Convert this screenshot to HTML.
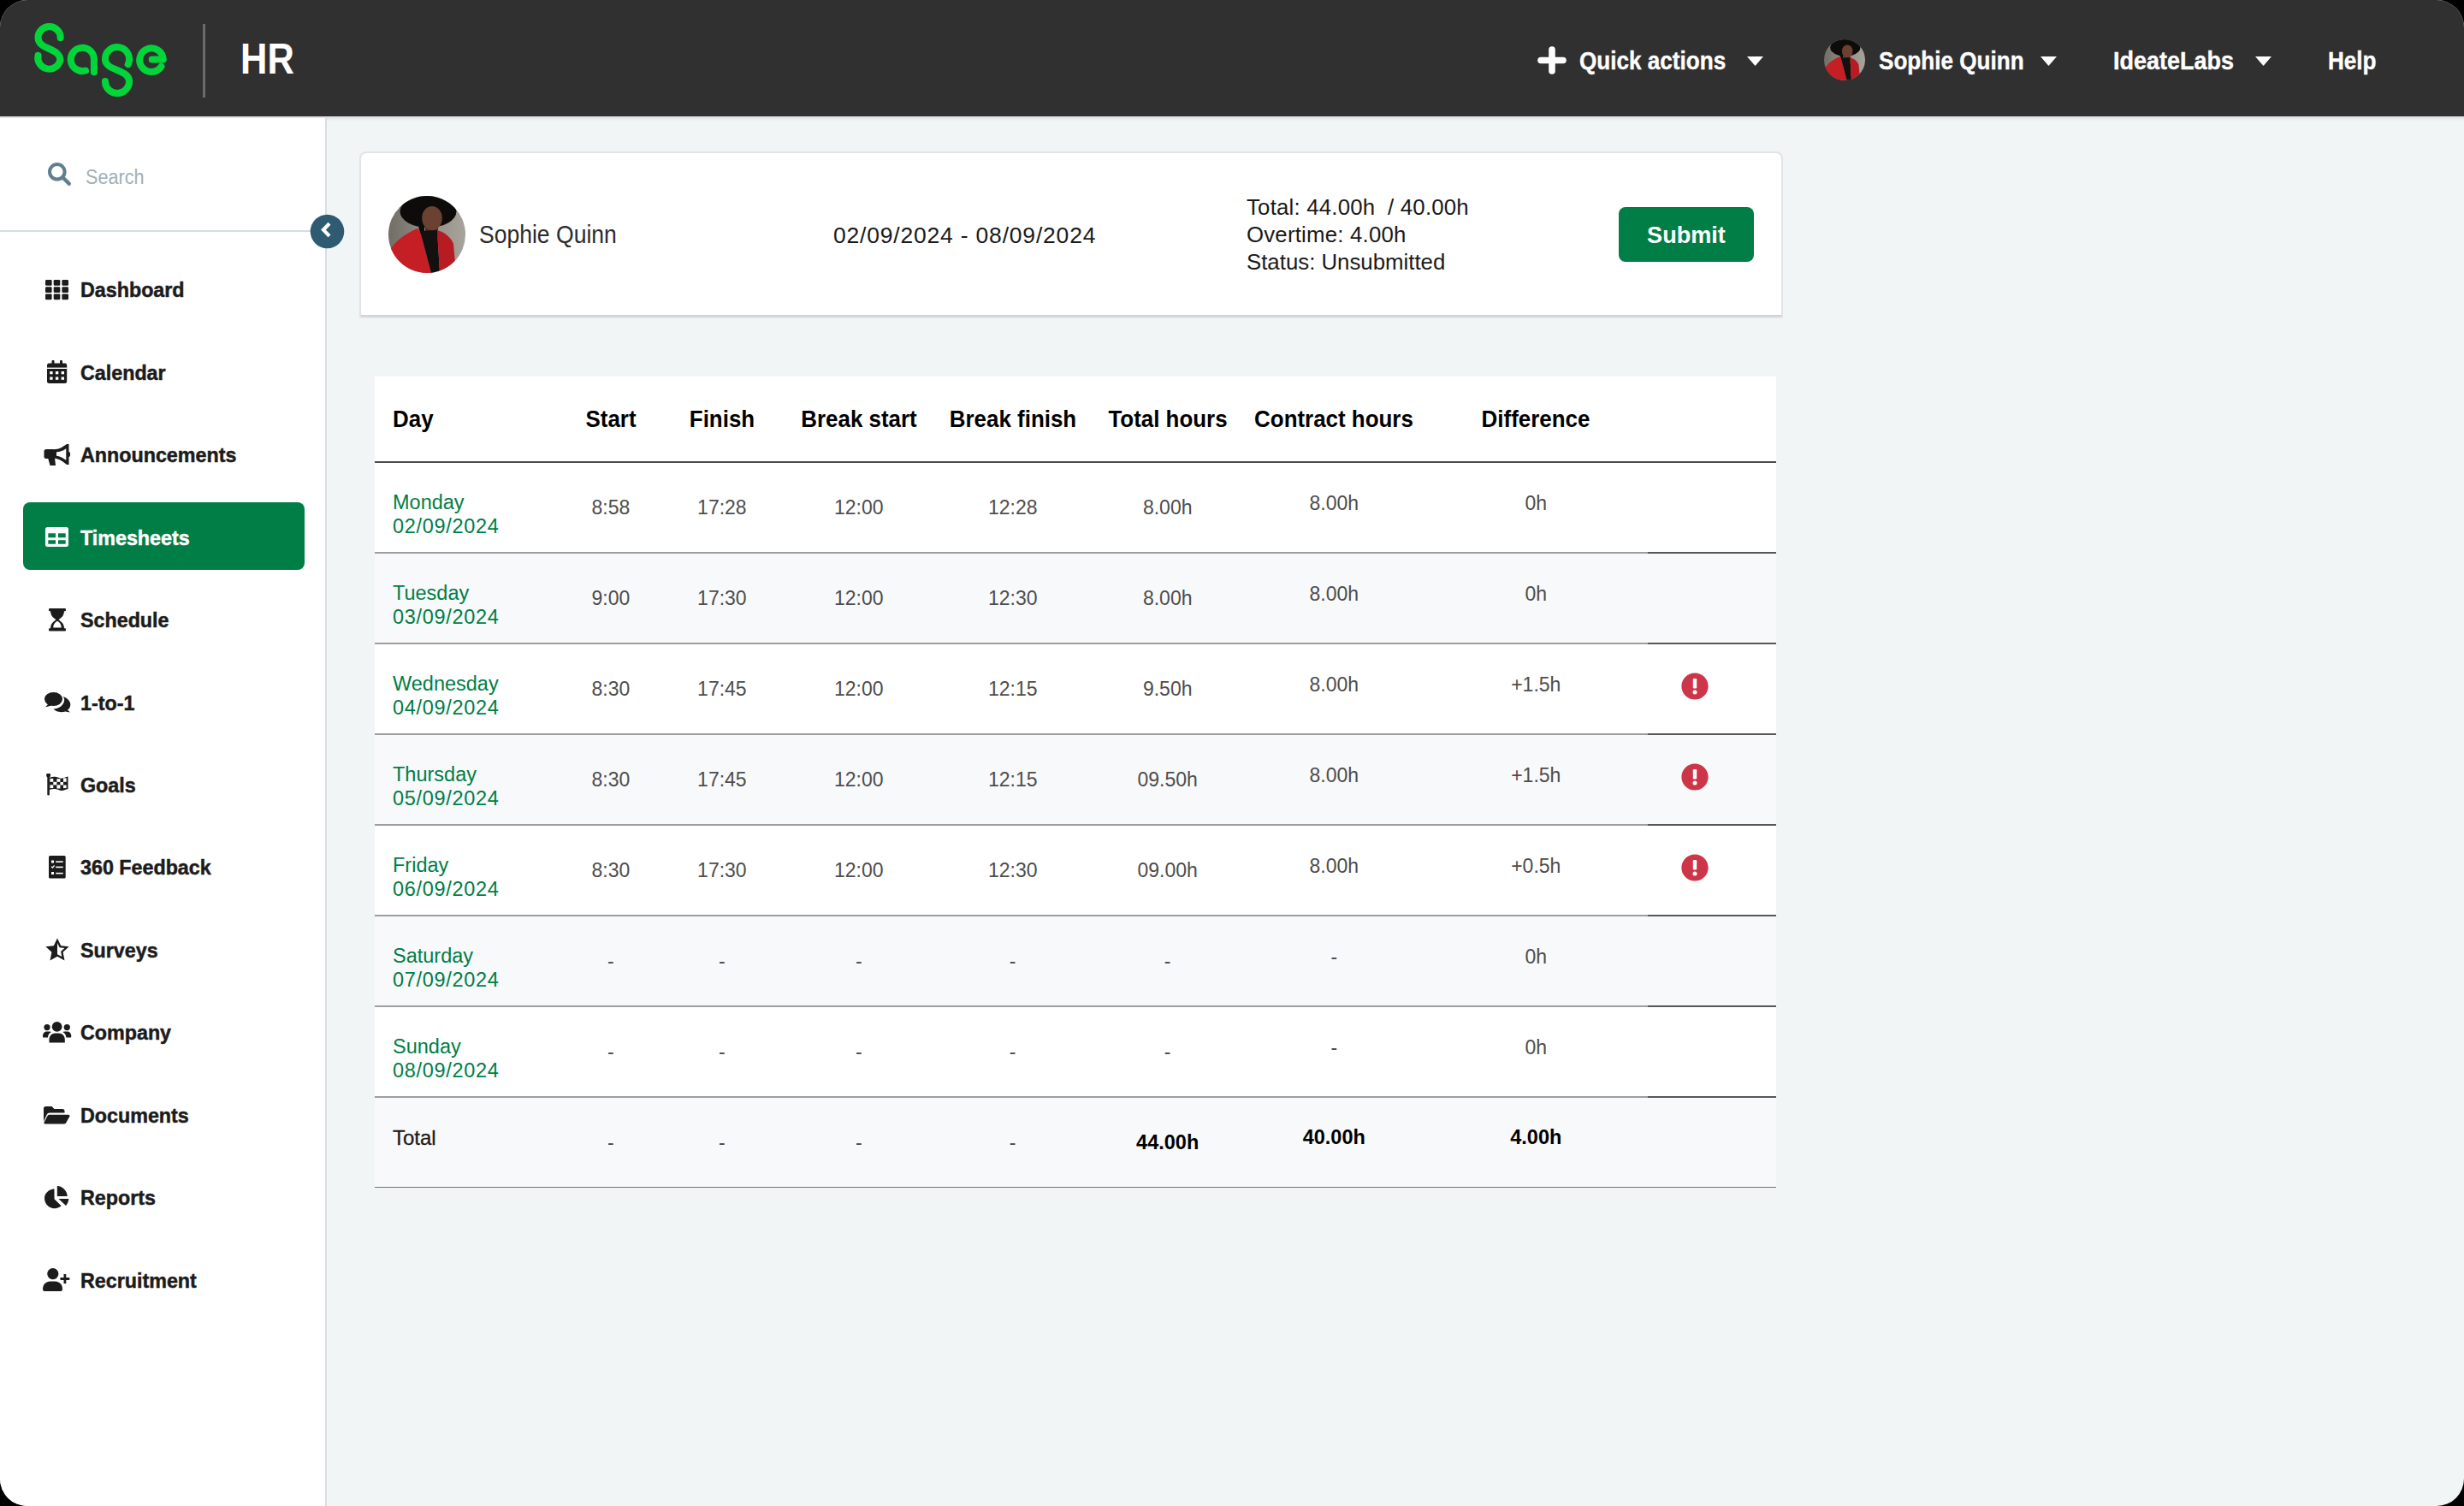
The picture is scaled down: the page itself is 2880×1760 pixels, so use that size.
<!DOCTYPE html>
<html><head><meta charset="utf-8"><title>Sage HR - Timesheets</title>
<style>
html,body{margin:0;padding:0;background:#000;width:2880px;height:1760px;overflow:hidden}
#root{position:absolute;left:0;top:0;width:2880px;height:1760px;border-radius:32px;overflow:hidden;background:#f2f5f6;font-family:"Liberation Sans",sans-serif}
.abs{position:absolute}
.t{position:absolute;white-space:nowrap}
#hdr{position:absolute;left:0;top:0;width:2880px;height:136px;background:#303030;border-bottom:2px solid #dfe3e6;box-shadow:0 2px 2px rgba(0,0,0,0.05)}
#side{position:absolute;left:0;top:138px;width:380px;height:1622px;background:#fff;border-right:2px solid #d8dee2}
</style></head><body><div id="root">
<div id="hdr"></div>
<svg class="abs" style="left:0;top:0" width="220" height="136" viewBox="0 0 220 136">
<g fill="none" stroke="#00d639" stroke-width="8" stroke-linecap="round" stroke-linejoin="round">
<path d="M70.7 44.2 A13.1 13.1 0 1 0 44.5 44.2 C44.5 58, 70.4 56, 70.4 70 A13.1 13.1 0 1 1 44.5 64.9"/>
<path d="M100.0 82.5 A13.6 13.6 0 1 1 109.9 69.3 L109.9 84.3"/>
<path d="M149.7 75.2 A14.1 14.1 0 1 0 122.9 69.3 C122.9 83, 151.1 81, 151.1 94.9 A14.1 14.1 0 1 1 122.9 94.9"/>
<path d="M177.7 69.5 L190.8 69.5 A13.8 13.8 0 1 0 188.5 77.8"/>
</g></svg>
<div class="abs" style="left:237px;top:28px;width:3px;height:86px;background:#6b6b6b"></div>
<div class="t" style="left:281.0px;top:44.4px;font-size:50px;line-height:50px;font-weight:700;color:#ffffff;transform-origin:0 0;transform:scaleX(0.87);">HR</div>
<svg class="abs" style="left:1797px;top:54px" width="34" height="33" viewBox="0 0 34 33"><path d="M17 4 V29 M4 16.5 H30" stroke="#fff" stroke-width="7.6" stroke-linecap="round"/></svg>
<div class="t" style="left:1846.0px;top:56.8px;font-size:29px;line-height:29px;font-weight:700;color:#ffffff;transform-origin:0 0;transform:scaleX(0.9);-webkit-text-stroke:0.4px #fff">Quick actions</div>
<svg class="abs" style="left:2042px;top:65.5px" width="19" height="11" viewBox="0 0 19 11"><path d="M0 0 H19 L9.5 11 Z" fill="#fff"/></svg>
<svg class="abs" style="left:2132px;top:46px" width="48" height="48" viewBox="0 0 90 90">
<defs><clipPath id="av1"><circle cx="45" cy="45" r="45"/></clipPath>
<linearGradient id="av1g" x1="0" x2="1"><stop offset="0" stop-color="#726e67"/><stop offset="0.55" stop-color="#948f87"/><stop offset="1" stop-color="#a7a49c"/></linearGradient></defs>
<g clip-path="url(#av1)">
<rect width="90" height="90" fill="url(#av1g)"/>
<ellipse cx="46.5" cy="18" rx="33" ry="19" fill="#0e0c0b"/><path d="M34 30 L42 30 L42 44 L37 44 Z" fill="#0e0c0b"/>
<path d="M43 34 L58 34 L58 48 L43 48 Z" fill="#4e2e20"/>
<ellipse cx="51" cy="26" rx="11.8" ry="14" fill="#6b4232"/>
<path d="M38 16 C42 9 58 9 63 16 L63 10 C56 4 44 4 38 10 Z" fill="#0e0c0b"/>
<path d="M0 66 C8 52 20 44 34 38 L37 41 L50 90 L0 90 Z" fill="#c51f25"/>
<path d="M37 41 L57 40 L60 90 L50 90 Z" fill="#131010"/>
<path d="M57 40 C65 42 73 48 76 56 L78 78 L70 90 L60 90 Z" fill="#b71c22"/>
</g></svg>
<div class="t" style="left:2196.0px;top:56.8px;font-size:29px;line-height:29px;font-weight:700;color:#ffffff;transform-origin:0 0;transform:scaleX(0.9);-webkit-text-stroke:0.4px #fff">Sophie Quinn</div>
<svg class="abs" style="left:2385px;top:65.5px" width="19" height="11" viewBox="0 0 19 11"><path d="M0 0 H19 L9.5 11 Z" fill="#fff"/></svg>
<div class="t" style="left:2470.0px;top:56.8px;font-size:29px;line-height:29px;font-weight:700;color:#ffffff;transform-origin:0 0;transform:scaleX(0.93);-webkit-text-stroke:0.4px #fff">IdeateLabs</div>
<svg class="abs" style="left:2636px;top:65.5px" width="19" height="11" viewBox="0 0 19 11"><path d="M0 0 H19 L9.5 11 Z" fill="#fff"/></svg>
<div class="t" style="left:2721.0px;top:57.1px;font-size:29px;line-height:29px;font-weight:700;color:#ffffff;transform-origin:0 0;transform:scaleX(0.9);-webkit-text-stroke:0.4px #fff">Help</div>
<div id="side"></div>
<svg class="abs" style="left:55px;top:189px" width="30" height="30" viewBox="0 0 30 30"><circle cx="11.8" cy="11.8" r="8.8" fill="none" stroke="#5f7f8e" stroke-width="4"/><path d="M18.3 18.3 L25.8 25.8" stroke="#5f7f8e" stroke-width="4.4" stroke-linecap="round"/></svg>
<div class="t" style="left:100.0px;top:195.6px;font-size:23.5px;line-height:23.5px;color:#a2afb6;transform-origin:0 0;transform:scaleX(0.92);">Search</div>
<div class="abs" style="left:0;top:269px;width:365px;height:2px;background:#d5dde1"></div>
<svg class="abs" style="left:362px;top:250.2px" width="41" height="41" viewBox="0 0 41 41"><circle cx="20.5" cy="20.5" r="19.8" fill="#2f5b72"/><path d="M23 11.3 L16 18.6 L23 25.9" fill="none" stroke="#fff" stroke-width="4.2"/></svg>
<div class="abs" style="left:27px;top:587px;width:329px;height:79px;background:#007e45;border-radius:8px"></div>
<svg class="abs" style="left:53px;top:326.8px" width="30" height="26" viewBox="0 0 30 26"><g fill="#1c1c1c"><rect x="0.0" y="0.0" width="7.6" height="6.8" rx="1.2"/><rect x="0.0" y="8.2" width="7.6" height="6.8" rx="1.2"/><rect x="0.0" y="16.4" width="7.6" height="6.8" rx="1.2"/><rect x="9.7" y="0.0" width="7.6" height="6.8" rx="1.2"/><rect x="9.7" y="8.2" width="7.6" height="6.8" rx="1.2"/><rect x="9.7" y="16.4" width="7.6" height="6.8" rx="1.2"/><rect x="19.4" y="0.0" width="7.6" height="6.8" rx="1.2"/><rect x="19.4" y="8.2" width="7.6" height="6.8" rx="1.2"/><rect x="19.4" y="16.4" width="7.6" height="6.8" rx="1.2"/></g></svg>
<div class="t" style="left:94.0px;top:327.2px;font-size:24px;line-height:24px;font-weight:700;color:#1c1c1c;transform-origin:0 0;transform:scaleX(0.97);-webkit-text-stroke:0.5px #1c1c1c">Dashboard</div>
<svg class="abs" style="left:55px;top:421px" width="30" height="30" viewBox="0 0 30 30"><g fill="#1c1c1c"><rect x="0" y="3.5" width="23.2" height="23.5" rx="2.5"/><rect x="5.5" y="0" width="3" height="6" rx="1"/><rect x="15" y="0" width="3" height="6" rx="1"/></g><g fill="#fff"><rect x="0" y="8.6" width="23.2" height="1.4"/><rect x="3.2" y="13" width="3.4" height="3.3"/><rect x="9.9" y="13" width="3.4" height="3.3"/><rect x="16.6" y="13" width="3.4" height="3.3"/><rect x="3.2" y="19.5" width="3.4" height="3.3"/><rect x="9.9" y="19.5" width="3.4" height="3.3"/><rect x="16.6" y="19.5" width="3.4" height="3.3"/></g></svg>
<div class="t" style="left:94.0px;top:423.6px;font-size:24px;line-height:24px;font-weight:700;color:#1c1c1c;transform-origin:0 0;transform:scaleX(0.97);-webkit-text-stroke:0.5px #1c1c1c">Calendar</div>
<svg class="abs" style="left:51.4px;top:518px" width="33" height="29" viewBox="0 0 33 29"><g fill="#1c1c1c"><rect x="0.5" y="7" width="13" height="11" rx="2.5"/><path d="M5 17 H13 L14 26 H7.5 Z"/><path d="M12 7.2 C17 7.2 21 5.5 27 1 L29.5 1 V25 L27 25 C21 20 17 17.8 12 17.8 Z M15 10.3 V14.7 C18.6 15 21.8 16.6 26.3 19.8 V6.2 C21.8 9.3 18.6 10 15 10.3 Z" fill-rule="evenodd"/><ellipse cx="29.5" cy="13" rx="1.6" ry="3"/></g></svg>
<div class="t" style="left:94.0px;top:520.1px;font-size:24px;line-height:24px;font-weight:700;color:#1c1c1c;transform-origin:0 0;transform:scaleX(0.97);-webkit-text-stroke:0.5px #1c1c1c">Announcements</div>
<svg class="abs" style="left:53.1px;top:616px" width="30" height="26" viewBox="0 0 30 26"><g fill="#ffffff"><path fill-rule="evenodd" d="M2.5 0 H24.5 A2.5 2.5 0 0 1 27 2.5 V20.5 A2.5 2.5 0 0 1 24.5 23 H2.5 A2.5 2.5 0 0 1 0 20.5 V2.5 A2.5 2.5 0 0 1 2.5 0 Z M3.3 7.3 V12.3 H12 V7.3 Z M15 7.3 V12.3 H23.7 V7.3 Z M3.3 15.2 V19.8 H12 V15.2 Z M15 15.2 V19.8 H23.7 V15.2 Z"/></g></svg>
<div class="t" style="left:94.0px;top:616.6px;font-size:24px;line-height:24px;font-weight:700;color:#ffffff;transform-origin:0 0;transform:scaleX(0.97);-webkit-text-stroke:0.5px #ffffff">Timesheets</div>
<svg class="abs" style="left:56.5px;top:710.5px" width="23" height="29" viewBox="0 0 23 29"><g fill="#1c1c1c"><rect x="0" y="0" width="20" height="3.2" rx="1"/><rect x="0" y="23.2" width="20" height="3.2" rx="1"/><path d="M2 2.5 H18 C18 9 14.5 11 11.5 13.2 C14.5 15.4 18 17.5 18 24 H2 C2 17.5 5.5 15.4 8.5 13.2 C5.5 11 2 9 2 2.5 Z M10 14.8 C7 16.5 5.4 18.5 5.2 22.4 H14.8 C14.6 18.5 13 16.5 10 14.8 Z" fill-rule="evenodd"/></g></svg>
<div class="t" style="left:94.0px;top:713.0px;font-size:24px;line-height:24px;font-weight:700;color:#1c1c1c;transform-origin:0 0;transform:scaleX(0.97);-webkit-text-stroke:0.5px #1c1c1c">Schedule</div>
<svg class="abs" style="left:51.5px;top:808.6px" width="33" height="27" viewBox="0 0 33 27"><g fill="#1c1c1c"><ellipse cx="10.5" cy="8" rx="10.5" ry="8"/><path d="M1 17.5 L5 13 L8 15.5 Z"/><path d="M21.5 5.2 C26.5 6.5 30.3 10 30.3 14.3 C30.3 17 29 19.3 27 20.8 L30 23.5 L24.3 22.5 C22.8 23 21.2 23.2 19.5 23.2 C15.7 23.2 12.5 21.8 10.5 19.6 C17.6 19.3 23.2 14.5 23.2 8.5 C23.2 7.3 22.5 6.2 21.5 5.2 Z"/></g></svg>
<div class="t" style="left:94.0px;top:809.5px;font-size:24px;line-height:24px;font-weight:700;color:#1c1c1c;transform-origin:0 0;transform:scaleX(0.97);-webkit-text-stroke:0.5px #1c1c1c">1-to-1</div>
<svg class="abs" style="left:53.8px;top:903.8px" width="29" height="30" viewBox="0 0 29 30"><g fill="#1c1c1c"><circle cx="2.6" cy="2" r="2.5"/><rect x="1.3" y="2" width="2.6" height="23.6" rx="1.3"/><path d="M3.8 5 C6 3.8 8.5 3.4 10.9 3.8 C13.5 4.2 15.5 5.7 18.1 5.7 C20.5 5.7 22.5 4 25.5 3.6 V18 C22.5 18.4 20.5 20 18.1 20 C15.5 20 13.5 18.4 10.9 18.1 C8.5 17.8 6 18.1 3.8 19 Z"/></g><g fill="#fff"><rect x="4.4" y="5.9" width="3.9" height="3.9"/><rect x="12.4" y="6.2" width="4" height="3.6"/><rect x="20" y="5.3" width="3.6" height="4.5"/><rect x="8.3" y="9.8" width="4.1" height="3.5"/><rect x="16.4" y="10" width="3.6" height="3.5"/><rect x="4.4" y="13.3" width="3.9" height="3.8"/><rect x="12.4" y="13.3" width="4" height="4.2"/><rect x="20" y="13.5" width="3.6" height="3.6"/></g></svg>
<div class="t" style="left:94.0px;top:905.9px;font-size:24px;line-height:24px;font-weight:700;color:#1c1c1c;transform-origin:0 0;transform:scaleX(0.97);-webkit-text-stroke:0.5px #1c1c1c">Goals</div>
<svg class="abs" style="left:56.8px;top:1000px" width="23" height="30" viewBox="0 0 23 30"><g fill="#1c1c1c"><rect x="0" y="0" width="19.7" height="26.5" rx="1.5"/></g><g fill="#fff"><rect x="3" y="5.5" width="3" height="3"/><rect x="8.2" y="6.3" width="8.5" height="1.6"/><path d="M3 12.6 L4.4 14 L6.6 11.5" stroke="#fff" stroke-width="1.2" fill="none"/><rect x="8.2" y="12.6" width="8.5" height="1.6"/><rect x="3" y="19" width="3" height="3"/><rect x="8.2" y="19.8" width="8.5" height="1.6"/></g></svg>
<div class="t" style="left:94.0px;top:1002.4px;font-size:24px;line-height:24px;font-weight:700;color:#1c1c1c;transform-origin:0 0;transform:scaleX(0.97);-webkit-text-stroke:0.5px #1c1c1c">360 Feedback</div>
<svg class="abs" style="left:52.5px;top:1096px" width="31" height="30" viewBox="0 0 31 30"><g fill="#1c1c1c"><path fill-rule="evenodd" d="M14 0.5 L18.2 9.2 L27.6 10.3 L20.6 16.8 L22.5 26.5 L14 21.8 L5.5 26.5 L7.4 16.8 L0.4 10.3 L9.8 9.2 Z M14 6 V19.2 L19.3 22.1 L18.1 16 L22.4 12.1 L16.6 11.3 Z"/></g></svg>
<div class="t" style="left:94.0px;top:1098.9px;font-size:24px;line-height:24px;font-weight:700;color:#1c1c1c;transform-origin:0 0;transform:scaleX(0.97);-webkit-text-stroke:0.5px #1c1c1c">Surveys</div>
<svg class="abs" style="left:49.7px;top:1194px" width="36" height="27" viewBox="0 0 36 27"><g fill="#1c1c1c"><circle cx="16.6" cy="5.9" r="5.9"/><circle cx="5" cy="6.6" r="3.6"/><circle cx="28.3" cy="6.6" r="3.6"/><path d="M7.5 24.5 V21 C7.5 16.5 10.5 13.5 14.5 13.5 H18.8 C22.8 13.5 25.8 16.5 25.8 21 V24.5 Z"/><path d="M0 17 C0 13.5 2 11.5 5 11.5 H8 C8.8 11.5 9.4 11.7 10 12 C7.4 13.5 6 15.8 6 18.5 H1.2 C0.5 18.5 0 18 0 17 Z"/><path d="M33.3 17 C33.3 13.5 31.3 11.5 28.3 11.5 H25.3 C24.5 11.5 23.9 11.7 23.3 12 C25.9 13.5 27.3 15.8 27.3 18.5 H32.1 C32.8 18.5 33.3 18 33.3 17 Z"/></g></svg>
<div class="t" style="left:94.0px;top:1195.3px;font-size:24px;line-height:24px;font-weight:700;color:#1c1c1c;transform-origin:0 0;transform:scaleX(0.97);-webkit-text-stroke:0.5px #1c1c1c">Company</div>
<svg class="abs" style="left:51.3px;top:1292.7px" width="34" height="24" viewBox="0 0 34 24"><g fill="#1c1c1c"><path d="M0 2.5 A2.5 2.5 0 0 1 2.5 0 H9.5 L12.5 3 H22 A2.5 2.5 0 0 1 24.5 5.5 V7.5 H7 C5.5 7.5 4.4 8.2 3.8 9.5 L0 17.5 Z"/><path d="M6.6 9.8 H29 C30.2 9.8 30.8 10.8 30.3 11.8 L26 19.5 C25.5 20.3 24.7 20.4 24 20.4 H1.8 C0.6 20.4 0.1 19.4 0.6 18.4 L4.5 11 C5 10.2 5.8 9.8 6.6 9.8 Z"/></g></svg>
<div class="t" style="left:94.0px;top:1291.8px;font-size:24px;line-height:24px;font-weight:700;color:#1c1c1c;transform-origin:0 0;transform:scaleX(0.97);-webkit-text-stroke:0.5px #1c1c1c">Documents</div>
<svg class="abs" style="left:52.4px;top:1386px" width="31" height="29" viewBox="0 0 31 29"><g fill="#1c1c1c"><path d="M11.5 3.5 V15.2 L19.6 23.3 C17.5 25 14.8 26.2 11.8 26.2 C5.3 26.2 0 20.9 0 14.5 C0 8.6 5 3.8 11.5 3.5 Z"/><path d="M14.8 0 C21.2 0.3 26.4 5.5 26.7 11.9 H14.8 Z"/><path d="M16.5 15.1 H28.4 C28.1 18.1 26.9 20.8 25 23 Z"/></g></svg>
<div class="t" style="left:94.0px;top:1388.2px;font-size:24px;line-height:24px;font-weight:700;color:#1c1c1c;transform-origin:0 0;transform:scaleX(0.97);-webkit-text-stroke:0.5px #1c1c1c">Reports</div>
<svg class="abs" style="left:49.8px;top:1482px" width="34" height="30" viewBox="0 0 34 30"><g fill="#1c1c1c"><circle cx="11.8" cy="6.6" r="6.6"/><path d="M0 24.5 C0 19 3.8 15.5 8.5 15.5 H14.5 C19.4 15.5 23 19 23 24.5 C23 26 22.2 27 21 27 H2 C0.8 27 0 26 0 24.5 Z"/><rect x="24.5" y="7" width="2.8" height="11" rx="0.6"/><rect x="20.4" y="11.1" width="11" height="2.8" rx="0.6"/></g></svg>
<div class="t" style="left:94.0px;top:1484.7px;font-size:24px;line-height:24px;font-weight:700;color:#1c1c1c;transform-origin:0 0;transform:scaleX(0.97);-webkit-text-stroke:0.5px #1c1c1c">Recruitment</div>
<div class="abs" style="left:420px;top:177px;width:1660px;height:189px;background:#fff;border:2px solid #e2e4e4;border-bottom-color:#cfd3d6;border-radius:8px 8px 3px 3px;box-shadow:0 2px 0 #e0e4e7"></div>
<svg class="abs" style="left:454px;top:229px" width="90" height="90" viewBox="0 0 90 90">
<defs><clipPath id="av2"><circle cx="45" cy="45" r="45"/></clipPath>
<linearGradient id="av2g" x1="0" x2="1"><stop offset="0" stop-color="#726e67"/><stop offset="0.55" stop-color="#948f87"/><stop offset="1" stop-color="#a7a49c"/></linearGradient></defs>
<g clip-path="url(#av2)">
<rect width="90" height="90" fill="url(#av2g)"/>
<ellipse cx="46.5" cy="18" rx="33" ry="19" fill="#0e0c0b"/><path d="M34 30 L42 30 L42 44 L37 44 Z" fill="#0e0c0b"/>
<path d="M43 34 L58 34 L58 48 L43 48 Z" fill="#4e2e20"/>
<ellipse cx="51" cy="26" rx="11.8" ry="14" fill="#6b4232"/>
<path d="M38 16 C42 9 58 9 63 16 L63 10 C56 4 44 4 38 10 Z" fill="#0e0c0b"/>
<path d="M0 66 C8 52 20 44 34 38 L37 41 L50 90 L0 90 Z" fill="#c51f25"/>
<path d="M37 41 L57 40 L60 90 L50 90 Z" fill="#131010"/>
<path d="M57 40 C65 42 73 48 76 56 L78 78 L70 90 L60 90 Z" fill="#b71c22"/>
</g></svg>
<div class="t" style="left:560.0px;top:259.5px;font-size:29px;line-height:29px;color:#2b2b2b;transform-origin:0 0;transform:scaleX(0.915);">Sophie Quinn</div>
<div class="t" style="left:974.0px;top:261.6px;font-size:26.5px;line-height:26.5px;color:#1a1a1a;transform-origin:0 0;letter-spacing:0.8px">02/09/2024 - 08/09/2024</div>
<div class="t" style="left:1457.0px;top:230.0px;font-size:25.8px;line-height:25.8px;color:#1a1a1a;transform-origin:0 0;letter-spacing:0.2px">Total: 44.00h&nbsp; / 40.00h</div>
<div class="t" style="left:1457.0px;top:262.1px;font-size:25.8px;line-height:25.8px;color:#1a1a1a;transform-origin:0 0;letter-spacing:0.2px">Overtime: 4.00h</div>
<div class="t" style="left:1457.0px;top:294.3px;font-size:25.8px;line-height:25.8px;color:#1a1a1a;transform-origin:0 0;">Status: Unsubmitted</div>
<div class="abs" style="left:1892px;top:242px;width:158px;height:64px;background:#007e45;border-radius:8px"></div>
<div class="t" style="left:1671.0px;width:600px;text-align:center;top:259.9px;font-size:28.5px;line-height:28.5px;font-weight:700;color:#ffffff;transform:scaleX(0.95);">Submit</div>
<div class="abs" style="left:438px;top:440px;width:1638px;height:99px;background:#fff"></div>
<div class="abs" style="left:438px;top:539px;width:1638px;height:2px;background:#4d4d4d"></div>
<div class="t" style="left:459.0px;top:476.8px;font-size:27px;line-height:27px;font-weight:700;color:#000;transform-origin:0 0;transform:scaleX(0.96);">Day</div>
<div class="t" style="left:413.9px;width:600px;text-align:center;top:476.8px;font-size:27px;line-height:27px;font-weight:700;color:#000;transform:scaleX(0.96);">Start</div>
<div class="t" style="left:543.9px;width:600px;text-align:center;top:476.8px;font-size:27px;line-height:27px;font-weight:700;color:#000;transform:scaleX(0.96);">Finish</div>
<div class="t" style="left:703.8px;width:600px;text-align:center;top:476.8px;font-size:27px;line-height:27px;font-weight:700;color:#000;transform:scaleX(0.96);">Break start</div>
<div class="t" style="left:883.7px;width:600px;text-align:center;top:476.8px;font-size:27px;line-height:27px;font-weight:700;color:#000;transform:scaleX(0.96);">Break finish</div>
<div class="t" style="left:1064.7px;width:600px;text-align:center;top:476.8px;font-size:27px;line-height:27px;font-weight:700;color:#000;transform:scaleX(0.96);">Total hours</div>
<div class="t" style="left:1259.3px;width:600px;text-align:center;top:476.8px;font-size:27px;line-height:27px;font-weight:700;color:#000;transform:scaleX(0.96);">Contract hours</div>
<div class="t" style="left:1495.3px;width:600px;text-align:center;top:476.8px;font-size:27px;line-height:27px;font-weight:700;color:#000;transform:scaleX(0.96);">Difference</div>
<div class="abs" style="left:438px;top:541px;width:1638px;height:104px;background:#ffffff"></div>
<div class="abs" style="left:438px;top:645px;width:1488px;height:2px;background:#9e9e9e"></div>
<div class="abs" style="left:1926px;top:645px;width:150px;height:2px;background:#575757"></div>
<div class="t" style="left:459.0px;top:575.7px;font-size:23.5px;line-height:23.5px;color:#007e45;transform-origin:0 0;">Monday</div>
<div class="t" style="left:459.0px;top:604.1px;font-size:23.5px;line-height:23.5px;color:#007e45;transform-origin:0 0;letter-spacing:0.7px">02/09/2024</div>
<div class="t" style="left:413.9px;width:600px;text-align:center;top:581.6px;font-size:23px;line-height:23px;color:#4d4d4d;">8:58</div>
<div class="t" style="left:543.9px;width:600px;text-align:center;top:581.6px;font-size:23px;line-height:23px;color:#4d4d4d;">17:28</div>
<div class="t" style="left:703.8px;width:600px;text-align:center;top:581.6px;font-size:23px;line-height:23px;color:#4d4d4d;">12:00</div>
<div class="t" style="left:883.7px;width:600px;text-align:center;top:581.6px;font-size:23px;line-height:23px;color:#4d4d4d;">12:28</div>
<div class="t" style="left:1064.7px;width:600px;text-align:center;top:581.6px;font-size:23px;line-height:23px;color:#4d4d4d;">8.00h</div>
<div class="t" style="left:1259.3px;width:600px;text-align:center;top:576.7px;font-size:23px;line-height:23px;color:#4d4d4d;">8.00h</div>
<div class="t" style="left:1495.3px;width:600px;text-align:center;top:576.7px;font-size:23px;line-height:23px;color:#4d4d4d;">0h</div>
<div class="abs" style="left:438px;top:647px;width:1638px;height:104px;background:#f8f9fb"></div>
<div class="abs" style="left:438px;top:751px;width:1488px;height:2px;background:#9e9e9e"></div>
<div class="abs" style="left:1926px;top:751px;width:150px;height:2px;background:#575757"></div>
<div class="t" style="left:459.0px;top:681.7px;font-size:23.5px;line-height:23.5px;color:#007e45;transform-origin:0 0;">Tuesday</div>
<div class="t" style="left:459.0px;top:710.1px;font-size:23.5px;line-height:23.5px;color:#007e45;transform-origin:0 0;letter-spacing:0.7px">03/09/2024</div>
<div class="t" style="left:413.9px;width:600px;text-align:center;top:687.6px;font-size:23px;line-height:23px;color:#4d4d4d;">9:00</div>
<div class="t" style="left:543.9px;width:600px;text-align:center;top:687.6px;font-size:23px;line-height:23px;color:#4d4d4d;">17:30</div>
<div class="t" style="left:703.8px;width:600px;text-align:center;top:687.6px;font-size:23px;line-height:23px;color:#4d4d4d;">12:00</div>
<div class="t" style="left:883.7px;width:600px;text-align:center;top:687.6px;font-size:23px;line-height:23px;color:#4d4d4d;">12:30</div>
<div class="t" style="left:1064.7px;width:600px;text-align:center;top:687.6px;font-size:23px;line-height:23px;color:#4d4d4d;">8.00h</div>
<div class="t" style="left:1259.3px;width:600px;text-align:center;top:682.7px;font-size:23px;line-height:23px;color:#4d4d4d;">8.00h</div>
<div class="t" style="left:1495.3px;width:600px;text-align:center;top:682.7px;font-size:23px;line-height:23px;color:#4d4d4d;">0h</div>
<div class="abs" style="left:438px;top:753px;width:1638px;height:104px;background:#ffffff"></div>
<div class="abs" style="left:438px;top:857px;width:1488px;height:2px;background:#9e9e9e"></div>
<div class="abs" style="left:1926px;top:857px;width:150px;height:2px;background:#575757"></div>
<div class="t" style="left:459.0px;top:787.7px;font-size:23.5px;line-height:23.5px;color:#007e45;transform-origin:0 0;">Wednesday</div>
<div class="t" style="left:459.0px;top:816.1px;font-size:23.5px;line-height:23.5px;color:#007e45;transform-origin:0 0;letter-spacing:0.7px">04/09/2024</div>
<div class="t" style="left:413.9px;width:600px;text-align:center;top:793.6px;font-size:23px;line-height:23px;color:#4d4d4d;">8:30</div>
<div class="t" style="left:543.9px;width:600px;text-align:center;top:793.6px;font-size:23px;line-height:23px;color:#4d4d4d;">17:45</div>
<div class="t" style="left:703.8px;width:600px;text-align:center;top:793.6px;font-size:23px;line-height:23px;color:#4d4d4d;">12:00</div>
<div class="t" style="left:883.7px;width:600px;text-align:center;top:793.6px;font-size:23px;line-height:23px;color:#4d4d4d;">12:15</div>
<div class="t" style="left:1064.7px;width:600px;text-align:center;top:793.6px;font-size:23px;line-height:23px;color:#4d4d4d;">9.50h</div>
<div class="t" style="left:1259.3px;width:600px;text-align:center;top:788.7px;font-size:23px;line-height:23px;color:#4d4d4d;">8.00h</div>
<div class="t" style="left:1495.3px;width:600px;text-align:center;top:788.7px;font-size:23px;line-height:23px;color:#4d4d4d;">+1.5h</div>
<svg class="abs" style="left:1965px;top:786px" width="32" height="32" viewBox="0 0 32 32"><circle cx="16" cy="16" r="15.6" fill="#cd3549"/><rect x="13.8" y="7" width="4.4" height="11.5" rx="1.2" fill="#fff"/><circle cx="16" cy="23" r="2.5" fill="#fff"/></svg>
<div class="abs" style="left:438px;top:859px;width:1638px;height:104px;background:#f8f9fb"></div>
<div class="abs" style="left:438px;top:963px;width:1488px;height:2px;background:#9e9e9e"></div>
<div class="abs" style="left:1926px;top:963px;width:150px;height:2px;background:#575757"></div>
<div class="t" style="left:459.0px;top:893.7px;font-size:23.5px;line-height:23.5px;color:#007e45;transform-origin:0 0;">Thursday</div>
<div class="t" style="left:459.0px;top:922.1px;font-size:23.5px;line-height:23.5px;color:#007e45;transform-origin:0 0;letter-spacing:0.7px">05/09/2024</div>
<div class="t" style="left:413.9px;width:600px;text-align:center;top:899.6px;font-size:23px;line-height:23px;color:#4d4d4d;">8:30</div>
<div class="t" style="left:543.9px;width:600px;text-align:center;top:899.6px;font-size:23px;line-height:23px;color:#4d4d4d;">17:45</div>
<div class="t" style="left:703.8px;width:600px;text-align:center;top:899.6px;font-size:23px;line-height:23px;color:#4d4d4d;">12:00</div>
<div class="t" style="left:883.7px;width:600px;text-align:center;top:899.6px;font-size:23px;line-height:23px;color:#4d4d4d;">12:15</div>
<div class="t" style="left:1064.7px;width:600px;text-align:center;top:899.6px;font-size:23px;line-height:23px;color:#4d4d4d;">09.50h</div>
<div class="t" style="left:1259.3px;width:600px;text-align:center;top:894.7px;font-size:23px;line-height:23px;color:#4d4d4d;">8.00h</div>
<div class="t" style="left:1495.3px;width:600px;text-align:center;top:894.7px;font-size:23px;line-height:23px;color:#4d4d4d;">+1.5h</div>
<svg class="abs" style="left:1965px;top:892px" width="32" height="32" viewBox="0 0 32 32"><circle cx="16" cy="16" r="15.6" fill="#cd3549"/><rect x="13.8" y="7" width="4.4" height="11.5" rx="1.2" fill="#fff"/><circle cx="16" cy="23" r="2.5" fill="#fff"/></svg>
<div class="abs" style="left:438px;top:965px;width:1638px;height:104px;background:#ffffff"></div>
<div class="abs" style="left:438px;top:1069px;width:1488px;height:2px;background:#9e9e9e"></div>
<div class="abs" style="left:1926px;top:1069px;width:150px;height:2px;background:#575757"></div>
<div class="t" style="left:459.0px;top:999.7px;font-size:23.5px;line-height:23.5px;color:#007e45;transform-origin:0 0;">Friday</div>
<div class="t" style="left:459.0px;top:1028.1px;font-size:23.5px;line-height:23.5px;color:#007e45;transform-origin:0 0;letter-spacing:0.7px">06/09/2024</div>
<div class="t" style="left:413.9px;width:600px;text-align:center;top:1005.6px;font-size:23px;line-height:23px;color:#4d4d4d;">8:30</div>
<div class="t" style="left:543.9px;width:600px;text-align:center;top:1005.6px;font-size:23px;line-height:23px;color:#4d4d4d;">17:30</div>
<div class="t" style="left:703.8px;width:600px;text-align:center;top:1005.6px;font-size:23px;line-height:23px;color:#4d4d4d;">12:00</div>
<div class="t" style="left:883.7px;width:600px;text-align:center;top:1005.6px;font-size:23px;line-height:23px;color:#4d4d4d;">12:30</div>
<div class="t" style="left:1064.7px;width:600px;text-align:center;top:1005.6px;font-size:23px;line-height:23px;color:#4d4d4d;">09.00h</div>
<div class="t" style="left:1259.3px;width:600px;text-align:center;top:1000.7px;font-size:23px;line-height:23px;color:#4d4d4d;">8.00h</div>
<div class="t" style="left:1495.3px;width:600px;text-align:center;top:1000.7px;font-size:23px;line-height:23px;color:#4d4d4d;">+0.5h</div>
<svg class="abs" style="left:1965px;top:998px" width="32" height="32" viewBox="0 0 32 32"><circle cx="16" cy="16" r="15.6" fill="#cd3549"/><rect x="13.8" y="7" width="4.4" height="11.5" rx="1.2" fill="#fff"/><circle cx="16" cy="23" r="2.5" fill="#fff"/></svg>
<div class="abs" style="left:438px;top:1071px;width:1638px;height:104px;background:#f8f9fb"></div>
<div class="abs" style="left:438px;top:1175px;width:1488px;height:2px;background:#9e9e9e"></div>
<div class="abs" style="left:1926px;top:1175px;width:150px;height:2px;background:#575757"></div>
<div class="t" style="left:459.0px;top:1105.7px;font-size:23.5px;line-height:23.5px;color:#007e45;transform-origin:0 0;">Saturday</div>
<div class="t" style="left:459.0px;top:1134.1px;font-size:23.5px;line-height:23.5px;color:#007e45;transform-origin:0 0;letter-spacing:0.7px">07/09/2024</div>
<div class="t" style="left:413.9px;width:600px;text-align:center;top:1111.6px;font-size:23px;line-height:23px;color:#4d4d4d;">-</div>
<div class="t" style="left:543.9px;width:600px;text-align:center;top:1111.6px;font-size:23px;line-height:23px;color:#4d4d4d;">-</div>
<div class="t" style="left:703.8px;width:600px;text-align:center;top:1111.6px;font-size:23px;line-height:23px;color:#4d4d4d;">-</div>
<div class="t" style="left:883.7px;width:600px;text-align:center;top:1111.6px;font-size:23px;line-height:23px;color:#4d4d4d;">-</div>
<div class="t" style="left:1064.7px;width:600px;text-align:center;top:1111.6px;font-size:23px;line-height:23px;color:#4d4d4d;">-</div>
<div class="t" style="left:1259.3px;width:600px;text-align:center;top:1106.7px;font-size:23px;line-height:23px;color:#4d4d4d;">-</div>
<div class="t" style="left:1495.3px;width:600px;text-align:center;top:1106.7px;font-size:23px;line-height:23px;color:#4d4d4d;">0h</div>
<div class="abs" style="left:438px;top:1177px;width:1638px;height:104px;background:#ffffff"></div>
<div class="abs" style="left:438px;top:1281px;width:1488px;height:2px;background:#9e9e9e"></div>
<div class="abs" style="left:1926px;top:1281px;width:150px;height:2px;background:#575757"></div>
<div class="t" style="left:459.0px;top:1211.7px;font-size:23.5px;line-height:23.5px;color:#007e45;transform-origin:0 0;">Sunday</div>
<div class="t" style="left:459.0px;top:1240.1px;font-size:23.5px;line-height:23.5px;color:#007e45;transform-origin:0 0;letter-spacing:0.7px">08/09/2024</div>
<div class="t" style="left:413.9px;width:600px;text-align:center;top:1217.6px;font-size:23px;line-height:23px;color:#4d4d4d;">-</div>
<div class="t" style="left:543.9px;width:600px;text-align:center;top:1217.6px;font-size:23px;line-height:23px;color:#4d4d4d;">-</div>
<div class="t" style="left:703.8px;width:600px;text-align:center;top:1217.6px;font-size:23px;line-height:23px;color:#4d4d4d;">-</div>
<div class="t" style="left:883.7px;width:600px;text-align:center;top:1217.6px;font-size:23px;line-height:23px;color:#4d4d4d;">-</div>
<div class="t" style="left:1064.7px;width:600px;text-align:center;top:1217.6px;font-size:23px;line-height:23px;color:#4d4d4d;">-</div>
<div class="t" style="left:1259.3px;width:600px;text-align:center;top:1212.7px;font-size:23px;line-height:23px;color:#4d4d4d;">-</div>
<div class="t" style="left:1495.3px;width:600px;text-align:center;top:1212.7px;font-size:23px;line-height:23px;color:#4d4d4d;">0h</div>
<div class="abs" style="left:438px;top:1283px;width:1638px;height:104px;background:#f8f9fb"></div>
<div class="abs" style="left:438px;top:1387px;width:1638px;height:1px;background:#6f7275"></div>
<div class="t" style="left:459.0px;top:1318.1px;font-size:24px;line-height:24px;color:#1a1a1a;transform-origin:0 0;-webkit-text-stroke:0.3px #1a1a1a">Total</div>
<div class="t" style="left:413.9px;width:600px;text-align:center;top:1323.9px;font-size:23px;line-height:23px;color:#4d4d4d;">-</div>
<div class="t" style="left:543.9px;width:600px;text-align:center;top:1323.9px;font-size:23px;line-height:23px;color:#4d4d4d;">-</div>
<div class="t" style="left:703.8px;width:600px;text-align:center;top:1323.9px;font-size:23px;line-height:23px;color:#4d4d4d;">-</div>
<div class="t" style="left:883.7px;width:600px;text-align:center;top:1323.9px;font-size:23px;line-height:23px;color:#4d4d4d;">-</div>
<div class="t" style="left:1064.7px;width:600px;text-align:center;top:1323.5px;font-size:23.5px;line-height:23.5px;font-weight:700;color:#000;">44.00h</div>
<div class="t" style="left:1259.3px;width:600px;text-align:center;top:1318.3px;font-size:23.5px;line-height:23.5px;font-weight:700;color:#000;">40.00h</div>
<div class="t" style="left:1495.3px;width:600px;text-align:center;top:1318.3px;font-size:23.5px;line-height:23.5px;font-weight:700;color:#000;">4.00h</div>
</div></body></html>
